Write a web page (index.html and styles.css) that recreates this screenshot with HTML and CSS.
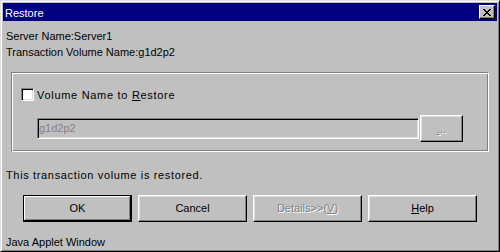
FILE: index.html
```html
<!DOCTYPE html>
<html>
<head>
<meta charset="utf-8">
<link rel="stylesheet" href="styles.css">
</head>
<body>
<div class="window">
  <div class="titlebar">
    <span class="title">Restore</span>
    <div class="close">
      <svg width="8" height="7" viewBox="0 0 8 7" shape-rendering="crispEdges">
        <path d="M0 0h2v1H0zM6 0h2v1H6zM1 1h2v1H1zM5 1h2v1H5zM2 2h4v1H2zM3 3h2v1H3zM2 4h4v1H2zM1 5h2v1H1zM5 5h2v1H5zM0 6h2v1H0zM6 6h2v1H6z" fill="#000"/>
      </svg>
    </div>
  </div>
  <div class="content">
    <p class="line">Server Name:Server1</p>
    <p class="line">Transaction Volume Name:g1d2p2</p>
    <div class="group">
      <div class="check"><span class="box"></span><span class="label">Volume Name to <u>R</u>estore</span></div>
      <div class="field-row">
        <div class="field">g1d2p2</div>
        <div class="btn browse"><span class="dis"><u>.</u>..</span></div>
      </div>
    </div>
    <p class="line status">This transaction volume is restored.</p>
    <div class="buttons">
      <div class="btn wide default">OK</div>
      <div class="btn wide">Cancel</div>
      <div class="btn wide"><span class="dis">Details&gt;&gt;(<u>V</u>)</span></div>
      <div class="btn wide"><span><u>H</u>elp</span></div>
    </div>
    <p class="line java">Java Applet Window</p>
  </div>
</div>
</body>
</html>
```
FILE: styles.css
```css
* { box-sizing: border-box; margin: 0; padding: 0; }
html, body { background: #c0c0c0; }
body {
  margin: 0;
  font-family: "Liberation Sans", Arial, sans-serif;
  font-size: 11px;
  color: #000;
}
.window {
  width: 500px;
  height: 252px;
  background: #c0c0c0;
  border: 1px solid;
  border-color: #dfdfdf #000 #000 #dfdfdf;
  box-shadow: inset 1px 1px #fff, inset -1px -1px #808080;
  padding: 2px;
  display: flex;
  flex-direction: column;
  overflow: hidden;
}
.titlebar {
  height: 18px;
  flex: none;
  background: #000080;
  color: #fff;
  display: flex;
  align-items: flex-start;
  justify-content: space-between;
  padding: 0 2px 0 2px;
}
.title {
  line-height: 16px;
  margin-top: 2px;
}
.close {
  margin-top: 2px;
  width: 16px;
  height: 14px;
  background: #c0c0c0;
  border: 1px solid;
  border-color: #fff #000 #000 #fff;
  box-shadow: inset -1px -1px #808080;
  display: flex;
  align-items: center;
  justify-content: center;
  padding-right: 1px;
}
.close svg { display: block; }
.content {
  padding: 7px 0 0 3px;
  display: flex;
  flex-direction: column;
}
.line {
  line-height: 16px;
  white-space: nowrap;
}
.group {
  margin: 12px 8px 0 5px;
  height: 80px;
  border: 1px solid;
  border-color: #808080 #fff #fff #808080;
  box-shadow: inset 1px 1px #fff, inset -1px -1px #808080;
  padding: 15px 0 0 9px;
}
.check {
  display: flex;
  align-items: center;
  gap: 3px;
  height: 13px;
  line-height: 13px;
}
.label {
  margin-top: 2px;
  letter-spacing: 0.7px;
  white-space: nowrap;
}
.box {
  width: 13px;
  height: 13px;
  background: #fff;
  border: 1px solid;
  border-color: #808080 #fff #fff #808080;
  box-shadow: inset 1px 1px #000, inset -1px -1px #dfdfdf;
}
.field-row {
  display: flex;
  align-items: center;
  margin-top: 14px;
  padding-left: 16px;
}
.field {
  width: 382px;
  height: 21px;
  border: 1px solid;
  border-color: #808080 #fff #fff #808080;
  box-shadow: inset 1px 1px #000, inset -1px -1px #dfdfdf;
  padding-left: 1px;
  line-height: 19px;
  color: #808080;
}
.btn {
  height: 27px;
  display: flex;
  align-items: center;
  justify-content: center;
  border: 1px solid;
  border-color: #fff #000 #000 #fff;
  box-shadow: inset -1px -1px #808080, inset 1px 1px #dfdfdf;
  line-height: 13px;
  white-space: nowrap;
}
.browse {
  width: 43px;
  margin-left: 1px;
  padding-top: 2px;
}
.dis {
  color: #808080;
  text-shadow: 1px 1px #fff;
}
.status {
  margin-top: 15px;
  letter-spacing: 0.65px;
}
.buttons {
  display: flex;
  gap: 6px;
  margin-top: 12px;
  padding-left: 17px;
}
.wide { width: 109px; }
.default {
  border-color: #000;
  box-shadow: inset -1px -1px #000, inset 1px 1px #fff, inset -2px -2px #808080;
}
.java { margin-top: 12px; }
```
